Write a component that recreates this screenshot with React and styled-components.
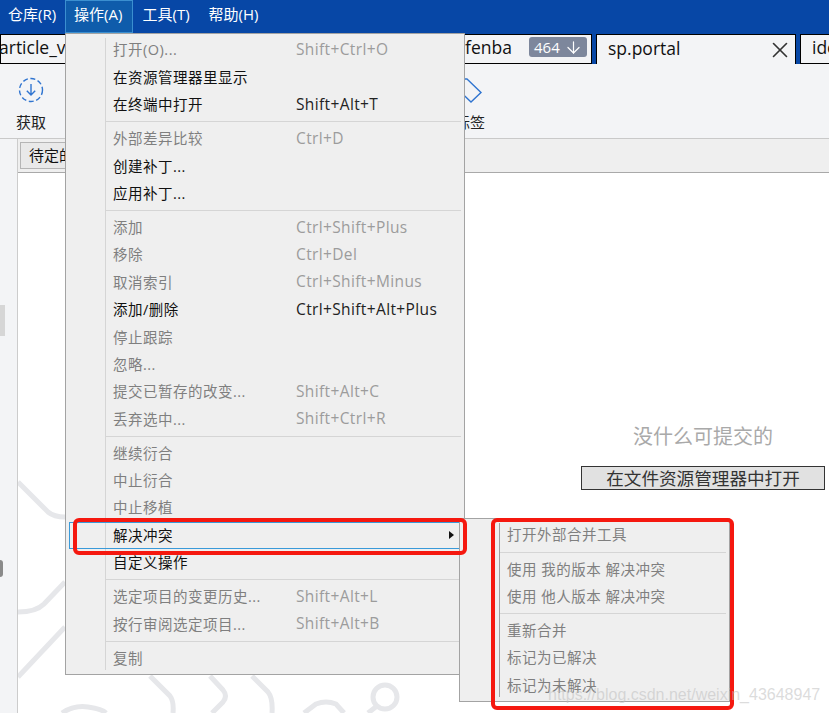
import styled, { createGlobalStyle } from "styled-components";
import { ArrowDown, X } from "lucide-react";

const GlobalStyle = createGlobalStyle`
  html, body {
    margin: 0;
    padding: 0;
    background: #fff;
  }
  * {
    box-sizing: border-box;
  }
  body {
    font-family: "Open Sans", "Noto Sans CJK SC", sans-serif;
  }
`;

const Page = styled.div`
  position: relative;
  width: 829px;
  height: 713px;
  overflow: hidden;
  display: flex;
  flex-direction: column;
`;

const MenuBar = styled.div`
  height: 34px;
  flex: none;
  display: flex;
  background: #0747a6;
`;

const BarItem = styled.div`
  height: 33px;
  padding: 0 ${({ $right }) => $right}px 0 ${({ $left }) => $left}px;
  line-height: 27px;
  font-size: 15px;
  color: #fff;
  white-space: nowrap;
  border: 1px solid ${({ $active }) => ($active ? "#3b8fd0" : "transparent")};
  background: ${({ $active }) => ($active ? "#0f5cab" : "transparent")};
`;

const TabRow = styled.div`
  height: 30px;
  flex: none;
  display: flex;
  background: #0747a6;
  overflow: hidden;
`;

const Tab = styled.div`
  height: 30px;
  flex: none;
  width: ${({ $width }) => $width}px;
  margin-right: ${({ $gap }) => $gap || 0}px;
  display: flex;
  align-items: center;
  padding: 0 ${({ $right }) => $right || 0}px 4px ${({ $left }) => $left || 0}px;
  gap: 16px;
  font-size: 17.5px;
  color: #111;
  background: #f3f4f6;
  border: 1px solid #000;
  border-bottom: ${({ $active }) => ($active ? "none" : "1px solid #000")};
  white-space: nowrap;
`;

const TabTitle = styled.span`
  flex: 1;
  overflow: hidden;
  margin-left: ${({ $shift }) => $shift || 0}px;
`;

const Badge = styled.span`
  height: 20px;
  width: 58px;
  flex: none;
  display: flex;
  align-items: center;
  justify-content: space-between;
  padding: 0 4px 0 5px;
  border-radius: 3px;
  background: #7d879c;
  color: #fff;
  font-size: 15px;
`;

const CloseIcon = styled(X)`
  flex: none;
  margin-top: 4px;
`;

const Toolbar = styled.div`
  height: 75px;
  flex: none;
  display: flex;
  gap: 379px;
  padding-left: 1px;
  background: #f3f4f6;
  border-bottom: 1px solid #c9c9c9;
`;

const ToolItem = styled.div`
  width: 60px;
  display: flex;
  flex-direction: column;
  align-items: center;
  padding-top: 13px;
  gap: 9px;
  font-size: 15px;
  line-height: 20px;
  color: #222;
`;

const Main = styled.div`
  flex: 1;
  display: flex;
`;

const Sidebar = styled.div`
  width: 18px;
  flex: none;
  display: flex;
  flex-direction: column;
  padding-top: 166px;
  background: #f3f4f6;
  border-right: 1px solid #cccccc;
`;

const SideMark = styled.div`
  width: 5px;
  height: 31px;
  background: #d6d6d6;
`;

const SideGrip = styled.div`
  width: 3px;
  height: 17px;
  margin-top: 224px;
  border-radius: 0 3px 3px 0;
  background: #8a8a8a;
`;

const Workspace = styled.div`
  flex: 1;
  display: flex;
  flex-direction: column;
`;

const SubBar = styled.div`
  height: 34px;
  flex: none;
  padding: 3px 0 0 2px;
  background: #efefef;
  border-bottom: 1px solid #a9a9a9;
`;

const SubButton = styled.div`
  display: inline-block;
  width: 120px;
  height: 27px;
  padding-left: 8px;
  line-height: 24px;
  font-size: 15px;
  color: #111;
  background: #e9e9e9;
  border: 1px solid #b5b5b5;
`;

const Body = styled.div`
  position: relative;
  flex: 1;
  display: flex;
  flex-direction: column;
  align-items: flex-end;
  padding: 250px 4px 0 0;
  background: #fff;
`;

const Backdrop = styled.svg`
  position: absolute;
  left: 0;
  top: 0;
  fill: none;
  stroke: #e6e7ea;
  stroke-width: 5;
`;

const EmptyBox = styled.div`
  position: relative;
  width: 244px;
  display: flex;
  flex-direction: column;
  align-items: center;
  gap: 15px;
`;

const EmptyTitle = styled.div`
  font-size: 20px;
  line-height: 28px;
  color: #a9a9a9;
`;

const OpenButton = styled.div`
  width: 244px;
  height: 24px;
  text-align: center;
  line-height: 22px;
  font-size: 17.6px;
  color: #333;
  background: #e1e1e1;
  border: 1px solid #333;
`;

const Menu = styled.div`
  position: absolute;
  left: ${({ $left }) => $left}px;
  top: ${({ $top }) => $top}px;
  width: ${({ $width }) => $width}px;
  padding: 2.3px 0;
  background: #efefef;
  border: 1px solid #a3a3a3;
  &::before {
    content: "";
    position: absolute;
    left: ${({ $gutter }) => $gutter}px;
    top: 4px;
    bottom: 4px;
    width: 1px;
    background: ${({ $gutterColor }) => $gutterColor};
  }
`;

const Row = styled.div`
  position: relative;
  height: 27.35px;
  margin: 0 3px;
  padding: 0 0 2px ${({ $pad }) => $pad}px;
  display: flex;
  align-items: center;
  font-size: 14.5px;
  white-space: nowrap;
  color: ${({ $muted }) => ($muted ? "#7f7f7f" : "#111")};
  box-shadow: ${({ $hover }) => ($hover ? "inset 0 0 0 1px #3a9ad9" : "none")};
`;

const RowLabel = styled.span`
  width: 183px;
  flex: none;
  letter-spacing: 0.5px;
`;

const Shortcut = styled.span`
  font-size: 15.5px;
  letter-spacing: 0.37px;
  color: ${({ $muted }) => ($muted ? "#9c9c9c" : "#222")};
`;

const SubArrow = styled.span`
  position: absolute;
  right: 7px;
  top: 9px;
  width: 0;
  height: 0;
  border-left: 5px solid #111;
  border-top: 4.5px solid transparent;
  border-bottom: 4.5px solid transparent;
`;

const Separator = styled.div`
  height: 6.8px;
  margin-left: ${({ $left }) => $left}px;
  margin-right: 3px;
  display: flex;
  align-items: center;
  &::after {
    content: "";
    flex: 1;
    height: 1px;
    background: #d5d5d5;
  }
`;

const RedFrame = styled.div`
  position: absolute;
  left: ${({ $left }) => $left}px;
  top: ${({ $top }) => $top}px;
  width: ${({ $width }) => $width}px;
  height: ${({ $height }) => $height}px;
  border: 4px solid #f5180f;
  border-radius: 6px;
`;

const Watermark = styled.div`
  position: absolute;
  left: 548px;
  top: 685px;
  font-family: "Liberation Sans", sans-serif;
  font-size: 16px;
  line-height: 20px;
  color: rgba(190, 190, 190, 0.55);
  white-space: nowrap;
`;

const actionItems = [
  { label: "打开(O)...", keys: "Shift+Ctrl+O", muted: true },
  { label: "在资源管理器里显示" },
  { label: "在终端中打开", keys: "Shift+Alt+T" },
  "sep",
  { label: "外部差异比较", keys: "Ctrl+D", muted: true },
  { label: "创建补丁..." },
  { label: "应用补丁..." },
  "sep",
  { label: "添加", keys: "Ctrl+Shift+Plus", muted: true },
  { label: "移除", keys: "Ctrl+Del", muted: true },
  { label: "取消索引", keys: "Ctrl+Shift+Minus", muted: true },
  { label: "添加/删除", keys: "Ctrl+Shift+Alt+Plus" },
  { label: "停止跟踪", muted: true },
  { label: "忽略...", muted: true },
  { label: "提交已暂存的改变...", keys: "Shift+Alt+C", muted: true },
  { label: "丢弃选中...", keys: "Shift+Ctrl+R", muted: true },
  "sep",
  { label: "继续衍合", muted: true },
  { label: "中止衍合", muted: true },
  { label: "中止移植", muted: true },
  { label: "解决冲突", hover: true },
  { label: "自定义操作" },
  "sep",
  { label: "选定项目的变更历史...", keys: "Shift+Alt+L", muted: true },
  { label: "按行审阅选定项目...", keys: "Shift+Alt+B", muted: true },
  "sep",
  { label: "复制", muted: true },
];

const conflictItems = [
  "打开外部合并工具",
  "sep",
  "使用 我的版本 解决冲突",
  "使用 他人版本 解决冲突",
  "sep",
  "重新合并",
  "标记为已解决",
  "标记为未解决",
];

const FetchIcon = () => (
  <svg width="26" height="26" viewBox="0 0 26 26" fill="none">
    <circle cx="13" cy="13" r="11.5" stroke="#2f74d0" strokeWidth="1.4" strokeDasharray="5 2.6" />
    <path d="M13 7v11M8.8 13.8 13 18l4.2-4.2" stroke="#2f74d0" strokeWidth="1.4" />
  </svg>
);

const TagIcon = () => (
  <svg width="60" height="26" viewBox="0 0 60 26" fill="none">
    <path d="M27 2 41 15.5 31 25 17 11.5V2z" stroke="#2f74d0" strokeWidth="1.4" />
  </svg>
);

const App = () => {
  return (
    <Page>
      <GlobalStyle />
      <MenuBar>
        <BarItem $left={7} $right={8}>仓库(R)</BarItem>
        <BarItem $left={8} $right={10} $active>操作(A)</BarItem>
        <BarItem $left={8} $right={8}>工具(T)</BarItem>
        <BarItem $left={9} $right={7}>帮助(H)</BarItem>
      </MenuBar>
      <TabRow>
        <Tab $width={300}>
          <TabTitle $shift={-2}>article_view</TabTitle>
        </Tab>
        <Tab $width={292} $gap={4} $left={164} $right={4}>
          <TabTitle>fenba</TabTitle>
          <Badge>
            464
            <ArrowDown size={19} strokeWidth={1.5} />
          </Badge>
        </Tab>
        <Tab $width={200} $gap={4} $left={11} $right={2} $active>
          <TabTitle>sp.portal</TabTitle>
          <CloseIcon size={26} strokeWidth={1.5} color="#333" />
        </Tab>
        <Tab $width={80} $left={11}>
          <TabTitle>ide</TabTitle>
        </Tab>
      </TabRow>
      <Toolbar>
        <ToolItem>
          <FetchIcon />
          获取
        </ToolItem>
        <ToolItem>
          <TagIcon />
          标签
        </ToolItem>
      </Toolbar>
      <Main>
        <Sidebar>
          <SideMark />
          <SideGrip />
        </Sidebar>
        <Workspace>
          <SubBar>
            <SubButton>待定的</SubButton>
          </SubBar>
          <Body>
            <Backdrop width="811" height="540" viewBox="18 173 811 540">
              <path d="M18 482 48 512q6 5 17 5" />
              <path d="M65 582 44 604q-8 8-26 8" />
              <path d="M65 627 18 677" />
              <path d="M62 713q12-8 26-6t18 6" />
              <path d="M150 676 170 696q4 5 3 17" />
              <path d="M210 676 223 690q5 6 0 12L212 713" />
              <path d="M252 676 268 692q5 6 4 21" />
              <path d="M304 713 316 704q10-4 20 0l8 9" />
              <circle cx="385" cy="697" r="12" />
              <path d="M377 706 368 713" />
            </Backdrop>
            <EmptyBox>
              <EmptyTitle>没什么可提交的</EmptyTitle>
              <OpenButton>在文件资源管理器中打开</OpenButton>
            </EmptyBox>
          </Body>
        </Workspace>
      </Main>

      <Menu $left={65} $top={33} $width={400} $gutter={39} $gutterColor="#d5d5d5">
        {actionItems.map((item, i) =>
          item === "sep" ? (
            <Separator key={i} $left={40} />
          ) : (
            <Row key={i} $pad={44} $muted={item.muted} $hover={item.hover}>
              <RowLabel>{item.label}</RowLabel>
              {item.keys && <Shortcut $muted={item.muted}>{item.keys}</Shortcut>}
              {item.hover && <SubArrow />}
            </Row>
          )
        )}
      </Menu>

      <Menu $left={459} $top={518} $width={271} $gutter={39} $gutterColor="#a0a0a0">
        {conflictItems.map((label, i) =>
          label === "sep" ? (
            <Separator key={i} $left={40} />
          ) : (
            <Row key={i} $pad={44} $muted>
              <RowLabel>{label}</RowLabel>
            </Row>
          )
        )}
      </Menu>

      <RedFrame $left={73} $top={518} $width={394} $height={37} />
      <RedFrame $left={491} $top={518} $width={243} $height={192} />
      <Watermark>https://blog.csdn.net/weixin_43648947</Watermark>
    </Page>
  );
};

export default App;
